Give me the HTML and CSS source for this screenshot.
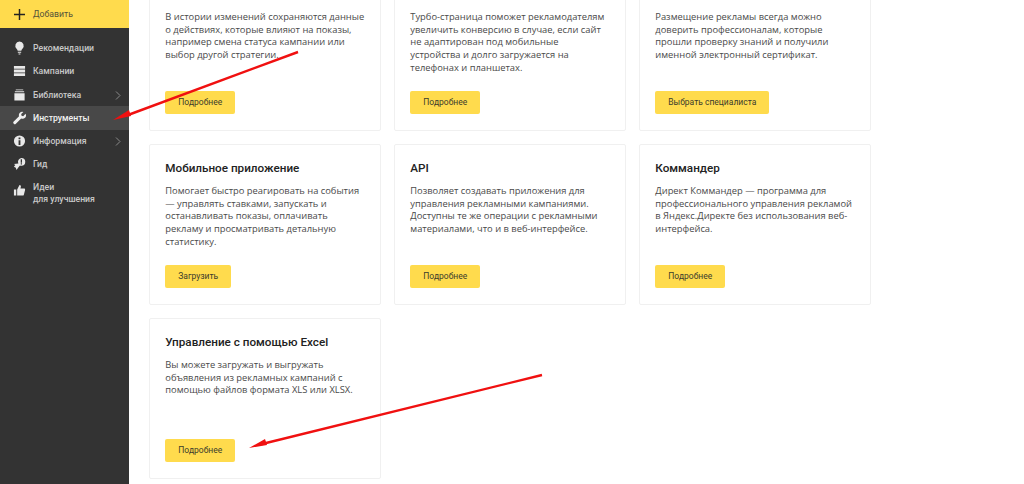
FILE: index.html
```html
<!DOCTYPE html>
<html lang="ru">
<head>
<meta charset="utf-8">
<title>Инструменты</title>
<link rel="stylesheet" href="styles.css">
</head>
<body>
<div class="layout">
  <aside class="sidebar">
    <div class="add"><svg class="add-icon" viewBox="0 0 12 12"><path d="M6 0v12M0 6h12" stroke="#222" stroke-width="1.6" fill="none"/></svg><span>Добавить</span></div>
    <nav class="menu">
      <div class="item"><svg class="ico" viewBox="0 0 14 14"><path d="M7 0a4.600 4.600 0 0 1 3 8c-.6.6-.9 1.200-1 2H5c-.1-.8-.4-1.400-1-2A4.600 4.600 0 0 1 7 0zM5.200 11h3.600v1.200H5.200zM6 12.800h2V14H6z" fill="#e8e8e8"/></svg><span>Рекомендации</span></div>
      <div class="item"><svg class="ico" viewBox="0 0 14 14"><path d="M1 1.500h12v3H1zM1 5.500h12v3H1zM1 9.500h12v3H1z" fill="#e8e8e8"/></svg><span>Кампании</span></div>
      <div class="item"><svg class="ico" viewBox="0 0 14 14"><path d="M3 1h8v1H3zM2 3h10v1H2zM1.500 5h11v8h-11z" fill="#e8e8e8"/></svg><span>Библиотека</span><svg class="chev" viewBox="0 0 6 10"><path d="M1 1l4 4-4 4" stroke="#8a8a8a" fill="none"/></svg></div>
      <div class="item active"><svg class="ico" viewBox="0 0 14 14"><path d="M13.500 2.500 11 5 9.200 4.500 8.800 2.800 11.200.5A3.600 3.600 0 0 0 6.500 5L.8 10.800a1.600 1.600 0 0 0 2.300 2.300L8.800 7.500a3.600 3.600 0 0 0 4.700-5z" fill="#f0f0f0"/></svg><span>Инструменты</span></div>
      <div class="item"><svg class="ico" viewBox="0 0 14 14"><path fill-rule="evenodd" d="M7 1a6 6 0 1 1 0 12A6 6 0 0 1 7 1zM6 3.200v2h2v-2zM6 6.200v5h2v-5z" fill="#e8e8e8"/></svg><span>Информация</span><svg class="chev" viewBox="0 0 6 10"><path d="M1 1l4 4-4 4" stroke="#8a8a8a" fill="none"/></svg></div>
      <div class="item"><svg class="ico" viewBox="0 0 14 14"><path fill-rule="evenodd" d="M9 .5a4.200 4.200 0 1 1 0 8.400 4.200 4.200 0 0 1-1.500-.3L5.500 11 3.800 13.500 3 11 1 10l1.500-2L1 7l4.800-.5A4.200 4.200 0 0 1 9 .5zM8.300 2v3.700h1.400V2zM8.300 6.300v1.300h1.400V6.300z" fill="#e8e8e8"/></svg><span>Гид</span></div>
      <div class="item tall"><svg class="ico" viewBox="0 0 14 14"><path d="M1 6.500h2.500V13H1zM4.500 6.500 7 1.500c1.200 0 1.700 1 1.500 2L8 5.500h4c.8 0 1.200.7 1 1.400l-1.300 5.200c-.2.600-.6.900-1.200.9H4.500z" fill="#e8e8e8"/></svg><span>Идеи<br>для улучшения</span></div>
    </nav>
  </aside>
  <main class="grid">
    <section class="card">
      <h2 class="title">&nbsp;</h2>
      <p class="text">В истории изменений сохраняются данные<br>о действиях, которые влияют на показы,<br>например смена статуса кампании или<br>выбор другой стратегии.</p>
      <a class="btn">Подробнее</a>
    </section>
    <section class="card">
      <h2 class="title">&nbsp;</h2>
      <p class="text">Турбо-страница поможет рекламодателям<br>увеличить конверсию в случае, если сайт<br>не адаптирован под мобильные<br>устройства и долго загружается на<br>телефонах и планшетах.</p>
      <a class="btn">Подробнее</a>
    </section>
    <section class="card">
      <h2 class="title">&nbsp;</h2>
      <p class="text">Размещение рекламы всегда можно<br>доверить профессионалам, которые<br>прошли проверку знаний и получили<br>именной электронный сертификат.</p>
      <a class="btn">Выбрать специалиста</a>
    </section>
    <section class="card">
      <h2 class="title">Мобильное приложение</h2>
      <p class="text">Помогает быстро реагировать на события<br>— управлять ставками, запускать и<br>останавливать показы, оплачивать<br>рекламу и просматривать детальную<br>статистику.</p>
      <a class="btn">Загрузить</a>
    </section>
    <section class="card">
      <h2 class="title">API</h2>
      <p class="text">Позволяет создавать приложения для<br>управления рекламными кампаниями.<br>Доступны те же операции с рекламными<br>материалами, что и в веб-интерфейсе.</p>
      <a class="btn">Подробнее</a>
    </section>
    <section class="card">
      <h2 class="title">Коммандер</h2>
      <p class="text">Директ Коммандер — программа для<br>профессионального управления рекламой<br>в Яндекс.Директе без использования веб-<br>интерфейса.</p>
      <a class="btn">Подробнее</a>
    </section>
    <section class="card">
      <h2 class="title">Управление с помощью Excel</h2>
      <p class="text">Вы можете загружать и выгружать<br>объявления из рекламных кампаний с<br>помощью файлов формата XLS или XLSX.</p>
      <a class="btn">Подробнее</a>
    </section>
  </main>
</div>
<svg class="arrows" viewBox="0 0 1024 484">
  <path d="M298 52 128 115" stroke="#f01010" stroke-width="2.400" fill="none"/>
  <path d="M113 120 129 110 131 116z" fill="#f01010"/>
  <path d="M542 375 262 444" stroke="#f01010" stroke-width="2.400" fill="none"/>
  <path d="M249 448 265 439 267 445z" fill="#f01010"/>
</svg>
</body>
</html>
```

FILE: styles.css
```css
* { box-sizing: border-box; }
html, body { margin: 0; height: 484px; overflow: hidden; background: #fff; }
body { font-family: "Open Sans", "Noto Sans", sans-serif; color: #222; }
.layout { display: flex; height: 484px; }
.sidebar { width: 129px; flex: none; background: #333; }
.add { height: 28px; background: #ffdb4d; display: flex; align-items: center; gap: 8px; padding-left: 14px; font-family: Roboto, sans-serif; font-size: 8.700px; color: #55523a; }
.add-icon { width: 11px; height: 11px; }
.menu { padding-top: 8.500px; }
.item { position: relative; height: 23.250px; display: flex; align-items: center; gap: 7px; padding-left: 13px; font-family: Roboto, sans-serif; font-size: 8.700px; font-weight: 500; color: #c8c8c8; }
.item.active { background: #484848; color: #f2f2f2; }
.item.tall { align-items: flex-start; padding-top: 5px; line-height: 12px; }
.item.tall .ico { margin-top: 2px; }
.ico { width: 13px; height: 14px; flex: none; }
.chev { position: absolute; left: 115px; top: 6.500px; width: 6px; height: 11px; }
.grid { display: grid; grid-template-columns: repeat(3, 232px); grid-auto-rows: 160.500px; column-gap: 13px; row-gap: 13.500px; margin: -30px 0 0 20px; }
.card { display: flex; flex-direction: column; align-items: flex-start; padding: 15px 5px 15.500px 15.300px; background: #fff; border: 1px solid #f0f0f0; border-radius: 2px; }
.title { margin: 0 0 8px; font-family: Roboto, sans-serif; font-size: 11.700px; line-height: 17px; font-weight: 500; color: #222; }
.text { margin: 0; font-size: 9.350px; line-height: 12.700px; color: #4a4a4a; }
.btn { margin-top: auto; height: 23.400px; padding: 0 13px; display: flex; align-items: center; background: #ffdb4d; border-radius: 2px; font-family: Roboto, sans-serif; font-size: 8.500px; color: #3c3c2c; }
.arrows { position: absolute; left: 0; top: 0; width: 1024px; height: 484px; pointer-events: none; }
```
